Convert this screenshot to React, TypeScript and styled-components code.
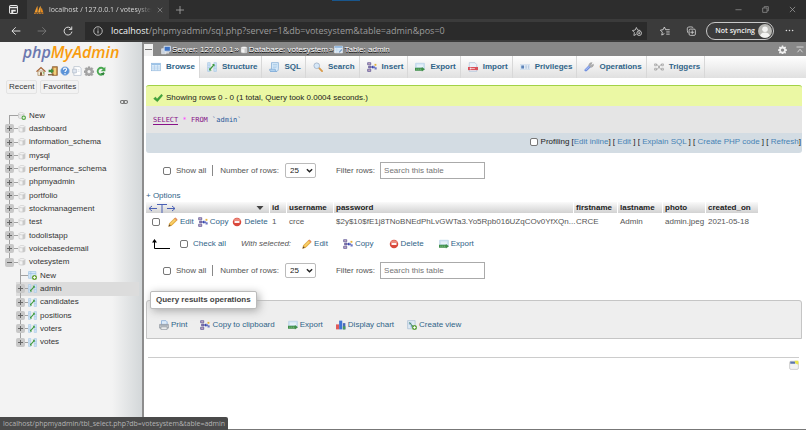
import React from "react";
import styled, { createGlobalStyle, css } from "styled-components";

const Global = createGlobalStyle`
  * { box-sizing: border-box; }
  html, body { margin: 0; padding: 0; }
  body { font-family: "Liberation Sans", Arial, sans-serif; font-size: 8px; line-height: 10px; color: #444; background: #fff; }
  button, input, select { font: inherit; color: inherit; margin: 0; }
  button { border: 0; padding: 0; background: none; cursor: pointer; }
  a { color: #2f6488; text-decoration: none; }
`;

/* ---------- icons ---------- */

const Svg = styled.svg<{ $s?: number }>`
  display: block;
  flex: none;
  width: ${(p) => p.$s ?? 10}px;
  height: ${(p) => p.$s ?? 10}px;
`;

type IconName =
  | "table" | "structure" | "sql" | "search" | "insert" | "export" | "import" | "privileges"
  | "operations" | "triggers" | "server" | "database" | "dbNew" | "tableNew" | "tableSmall" | "check"
  | "pencil" | "delete" | "print" | "chart" | "view" | "home" | "exit" | "help" | "doc" | "gear"
  | "reload" | "link" | "window" | "gearWhite" | "collapse" | "sort"
  | "back" | "forward" | "refresh" | "info" | "starAdd" | "favorites" | "collections" | "avatar"
  | "dots" | "minimize" | "restore" | "close" | "plus" | "tabActions" | "pma";

const gearPath =
  "M6.8 1h2.4l.4 2 1.4.6 1.8-1.1 1.6 1.7-1.1 1.7.6 1.4 2.1.5v2.4l-2.1.4-.6 1.4 1.1 1.8-1.6 1.6-1.8-1.1-1.4.6-.4 2.1H6.8l-.4-2.1-1.4-.6-1.8 1.1-1.6-1.6 1.1-1.8-.6-1.4L0 10.200V7.800l2.100-.5.6-1.400L1.600 4.200l1.600-1.700L5 3.600 6.400 3zM8 6a3 3 0 1 0 0 6 3 3 0 0 0 0-6z";

const art: Record<IconName, React.ReactNode> = {
  table: (
    <>
      <rect x="1" y="2" width="14" height="12" fill="#e3f0fb" stroke="#8db4da" />
      <rect x="1" y="2" width="14" height="3" fill="#9cc2e6" />
      <path d="M1 8h14M1 11h14M5.500 5v9M10.500 5v9" stroke="#a9c9e8" />
    </>
  ),
  structure: (
    <>
      <path d="M1 1h4v14H1zM11 1h4v14h-4z" fill="#cfe4f7" stroke="#a3c6e4" />
      <path d="M1 5h4M1 9h4M11 6h4M11 10h4" stroke="#a3c6e4" />
      <path d="M4.500 12L11 4.500" stroke="#3e9a3c" strokeWidth="2" />
      <path d="M3.500 9.500v4h4zM12 7V3H8z" fill="#3e9a3c" />
    </>
  ),
  sql: (
    <>
      <path d="M4 1h11v9.500c0 2-1 4.500-3 4.500H2c2 0 2-2 2-4z" fill="#d8ebfa" stroke="#6e9fd0" />
      <path d="M1 11.500h9c0 2 .5 3.500 2 3.500H3c-1.500 0-2-1.500-2-3.500z" fill="#b6d5f0" stroke="#6e9fd0" />
      <path d="M6 4h7M6 6.500h7M6 9h6" stroke="#9bc0e2" />
    </>
  ),
  search: (
    <>
      <path d="M9.500 9.500l5 5" stroke="#d99b4a" strokeWidth="3" strokeLinecap="round" />
      <circle cx="6" cy="6" r="4.500" fill="#d6e8f8" stroke="#a7b8cc" strokeWidth="1.500" />
    </>
  ),
  insert: (
    <>
      <path d="M1 1h5v3.500H1zM2.500 6.500h4v3h-4zM1 11.500h5V15H1z" fill="#8b80b8" stroke="#5b5290" />
      <path d="M2 2.800h3M2 13.200h3" stroke="#e7c0c0" strokeWidth="1.200" />
      <path d="M6.500 8L10 5v2h3v2h-3v2z" fill="#3b49b0" />
      <path d="M12 3h3v3h-3z" fill="#e4b23a" />
      <path d="M12 8.500h3.500v3.500H12z" fill="#6d76c2" />
    </>
  ),
  export: (
    <>
      <path d="M1 2h14v9H1z" fill="#cfe3f4" stroke="#b2cde4" />
      <path d="M3 5h10M3 7h10" stroke="#fff" />
      <path d="M0 9h11V8l5 3.500-5 3.500v-1H0z" fill="#3f8f4b" />
      <path d="M2 11.500h9" stroke="#a8dca5" strokeDasharray="2 1" />
    </>
  ),
  import: (
    <>
      <path d="M2 1h9l3 3v11H2z" fill="#eaf1f9" stroke="#a9bdd4" />
      <path d="M0 8h16v5H0z" fill="#d9505a" />
      <path d="M3 10.500h8M5 9L3 10.500 5 12" stroke="#fff" fill="none" />
    </>
  ),
  privileges: (
    <>
      <path d="M0 4h16v8H0z" fill="#e8f0f8" stroke="#c9d8e8" />
      <path d="M2 5.500h4.500v5H2z" fill="#5c83b8" />
      <path d="M8.500 6.500h2.500M8.500 9.500h2.500M12.500 6.500h2M12.500 9.500h2" stroke="#6c8db8" />
    </>
  ),
  operations: (
    <>
      <path d="M3 13L10 6" stroke="#6f8fe0" strokeWidth="4.500" strokeLinecap="round" />
      <path d="M3 12.500L9.500 6" stroke="#bccbf7" strokeWidth="1.500" strokeLinecap="round" />
      <path d="M8 5.500C7.500 3 10 .5 13 1.200L11 3.500l1.500 1.700 2.500-1.700c.7 3-2 5.500-4.500 4.700z" fill="#b4b4b4" stroke="#8c8c8c" strokeWidth=".8" />
    </>
  ),
  triggers: (
    <>
      <path d="M1 4h4l6 8h4M1 12h4l6-8h4" stroke="#a5a5a5" strokeWidth="1.500" fill="none" />
      <path d="M1 3h3v3H1zM12 3h3v3h-3zM12 10h3v3h-3zM1 10h3v3H1z" fill="#dcdcdc" stroke="#9d9d9d" />
    </>
  ),
  server: (
    <>
      <path d="M1 6h7v8H1z" fill="#c9d3df" stroke="#f0f4f8" />
      <path d="M5 2h10v8H5z" fill="#3d72c4" stroke="#dce6f2" strokeWidth="1.500" />
      <path d="M7 12.500h6" stroke="#e8e8e8" strokeWidth="2" />
    </>
  ),
  database: (
    <>
      <path d="M2 3.500v9C2 14.500 14 14.500 14 12.500v-9" fill="#f2f2f2" stroke="#b5b5b5" />
      <path d="M9 5.500v8.500c3 0 5-.5 5-1.500v-9z" fill="#c9c9c9" />
      <ellipse cx="8" cy="3.500" rx="6" ry="2.200" fill="#fafafa" stroke="#b5b5b5" />
    </>
  ),
  dbNew: (
    <>
      <path d="M1 3.500v8C1 13.500 12 13.500 12 11.500v-8" fill="#e8e8e8" stroke="#b5b5b5" />
      <ellipse cx="6.500" cy="3.500" rx="5.500" ry="2.200" fill="#fafafa" stroke="#b5b5b5" />
      <circle cx="11.500" cy="11.500" r="4.500" fill="#52a642" />
      <path d="M11.500 9v5M9 11.500h5" stroke="#fff" strokeWidth="1.600" />
    </>
  ),
  tableNew: (
    <>
      <path d="M1 1h13v12H1z" fill="#d5e8f8" stroke="#93bbdf" />
      <path d="M1 4.500h13M5 1v12" stroke="#93bbdf" />
      <circle cx="11.500" cy="11.500" r="4.500" fill="#6aa33a" />
      <path d="M11.500 9v5M9 11.500h5" stroke="#fff" strokeWidth="1.600" />
    </>
  ),
  tableSmall: (
    <>
      <path d="M1 2h14v12H1z" fill="#dcebf8" stroke="#f2f7fc" />
      <path d="M1 2h14v3H1z" fill="#8db4dc" />
      <path d="M5 5v9M1 9h14" stroke="#b4d0ea" />
      <path d="M9 13l5-5" stroke="#7a9cc2" strokeWidth="2" />
    </>
  ),
  check: (
    <path d="M1 9l3-2.500 2.500 3L13.500 2 15.500 4 7 14z" fill="#3fa53a" stroke="#2f8430" strokeWidth=".6" />
  ),
  pencil: (
    <>
      <path d="M1 15l1.500-5L11 1.500 14.500 5 6 13.500z" fill="#f3bf4b" stroke="#c98a26" strokeWidth=".8" />
      <path d="M10 2.500L12 .8 15.300 4l-1.800 2z" fill="#e28a62" />
      <path d="M1 15l1-3.500L4.500 14z" fill="#5a4632" />
      <path d="M4.500 11L11.500 4" stroke="#fde9a8" />
    </>
  ),
  delete: (
    <>
      <circle cx="8" cy="8" r="6.800" fill="#d9483b" />
      <path d="M2 6.500a6.200 6.200 0 0 1 12 0z" fill="#ec8a7d" />
      <path d="M4 6.500h8v3H4z" fill="#fff" />
    </>
  ),
  print: (
    <>
      <path d="M4 1h7l2 2v5H4z" fill="#dcebfa" stroke="#6d9ad2" />
      <path d="M1 7h14v6H1z" fill="#cfd3d9" stroke="#7d858f" />
      <path d="M3 11h10v4H3z" fill="#f2f2f2" stroke="#7d858f" />
      <path d="M2 9h12" stroke="#8e969f" />
    </>
  ),
  chart: (
    <>
      <path d="M0 7h5v8H0z" fill="#e05a5a" />
      <path d="M5 1h5v14H5z" fill="#3f74d4" />
      <path d="M11 5h4v10h-4z" fill="#4a69b8" />
      <path d="M11 10h4v5h-4z" fill="#4c9a5a" />
    </>
  ),
  view: (
    <>
      <path d="M1 1h12v13H1z" fill="#dfeaf4" stroke="#9fb8d0" />
      <path d="M3 4h4v3H3zM6 8h4v4H6z" fill="#7fa9c9" />
      <path d="M4 4l6 7" stroke="#4c8d54" strokeWidth="1.500" />
      <circle cx="12" cy="12" r="4" fill="#63a545" />
      <path d="M12 10v4M10 12h4" stroke="#fff" strokeWidth="1.500" />
    </>
  ),
  home: (
    <>
      <path d="M3 8h10v7H3z" fill="#f6eedd" stroke="#9c7a4c" />
      <path d="M0 8.500L8 1l8 7.500-1.500 1L8 4 1.500 9.500z" fill="#a8683a" />
      <path d="M6.500 10h3v5h-3z" fill="#7c5430" />
      <path d="M11 10h2v2h-2z" fill="#6fb052" />
    </>
  ),
  exit: (
    <>
      <path d="M7 1h8v14H7z" fill="#c58b48" stroke="#7d5223" />
      <path d="M9 3h4v11H9z" fill="#f0d17c" />
      <path d="M1 6h4V3.500L9.500 8 5 12.500V10H1z" fill="#3f8f3a" />
      <path d="M0 13h9v2H0z" fill="#7e5b36" />
    </>
  ),
  help: (
    <>
      <circle cx="8" cy="8" r="7" fill="#5b93d8" stroke="#a8c2e4" />
      <path d="M5.500 6c0-3.500 5-3.500 5-.5 0 2-2.500 2-2.500 4M8 11v2" stroke="#fff" strokeWidth="1.800" fill="none" />
    </>
  ),
  doc: (
    <>
      <path d="M3 1h9l2.500 3v11H3z" fill="#fff" stroke="#a8b4c4" />
      <path d="M1 5h6v6H1z" fill="#dfe6f0" stroke="#a8b4c4" />
      <path d="M9 6h3M9 8.500h3" stroke="#c4cedb" />
    </>
  ),
  gear: <path d={gearPath} fill="#a4a4a4" stroke="#8a8a8a" strokeWidth=".6" fillRule="evenodd" />,
  gearWhite: <path d={gearPath} fill="#f0f0f0" fillRule="evenodd" />,
  reload: (
    <>
      <path d="M12.500 5A5.500 5.500 0 1 0 13 11" stroke="#49a850" strokeWidth="3" fill="none" />
      <path d="M15 1v7.500H7.500z" fill="#49a850" />
      <path d="M7 12l6-2-1 5z" fill="#2f7f3b" />
    </>
  ),
  link: (
    <>
      <rect x="1" y="5" width="8" height="6" rx="3" fill="none" stroke="#777" strokeWidth="2.200" />
      <rect x="7" y="5" width="8" height="6" rx="3" fill="none" stroke="#777" strokeWidth="2.200" />
    </>
  ),
  window: (
    <>
      <rect x="1" y="2" width="14" height="13" rx="2" fill="#f2f2f2" stroke="#b9b9b9" />
      <path d="M2 2.500h8v3.500H2z" fill="#5a74ae" />
      <path d="M9 1h6v6c-3 0-6-2-6-6z" fill="#e9e54a" />
    </>
  ),
  collapse: <path d="M1 2h14M3 12.500l5-6 5 6" stroke="#dedede" strokeWidth="1.800" fill="none" />,
  sort: <path d="M1 4h14L8 12z" fill="#444" />,
  back: <path d="M15 8H1.500M7.500 2L1.500 8l6 6" stroke="#e4e4e4" strokeWidth="1.500" fill="none" />,
  forward: <path d="M1 8h13.500M8.500 2l6 6-6 6" stroke="#777" strokeWidth="1.500" fill="none" />,
  refresh: (
    <>
      <path d="M13.500 5A6.300 6.300 0 1 0 14.300 9" stroke="#e4e4e4" strokeWidth="1.500" fill="none" />
      <path d="M14 .8V5.500H9.300" stroke="#e4e4e4" strokeWidth="1.500" fill="none" />
    </>
  ),
  info: (
    <>
      <circle cx="8" cy="8" r="6.800" stroke="#d4d4d4" strokeWidth="1.300" fill="none" />
      <path d="M8 7v4.800M8 4v1.700" stroke="#d4d4d4" strokeWidth="1.500" />
    </>
  ),
  starAdd: (
    <>
      <path d="M7 13.200l-4 2 .8-4.700L.6 7.200l4.500-.7L7 2.400l2 4.100 4.200.6" stroke="#d0d0d0" strokeWidth="1.300" fill="none" />
      <circle cx="11.500" cy="11.500" r="3.700" fill="#2d2d2d" stroke="#d0d0d0" strokeWidth="1.400" />
      <path d="M11.500 9.800v3.400M9.800 11.500h3.400" stroke="#d0d0d0" strokeWidth="1.200" />
    </>
  ),
  favorites: (
    <path d="M7 12.200l-4.200 2.300.9-4.700L.6 6.600l4.400-.7L7 1.600l2 4.300h6.500M10 9.500h5.500M10 13h5.500" stroke="#d8d8d8" strokeWidth="1.400" fill="none" />
  ),
  collections: (
    <>
      <path d="M4 11.500C2 11 1.500 4 2.500 2.500 4 1 10 1 11.500 2.500" stroke="#d8d8d8" strokeWidth="1.300" fill="none" />
      <rect x="5" y="5" width="10" height="10" rx="2" stroke="#d8d8d8" strokeWidth="1.300" fill="none" />
      <path d="M10 7v6M7 10h6" stroke="#d8d8d8" strokeWidth="1.300" />
    </>
  ),
  avatar: (
    <>
      <circle cx="8" cy="8" r="8" fill="#b9b9b5" />
      <circle cx="8" cy="6" r="3.200" fill="#f4f4f2" />
      <path d="M2.500 13.500c1-5 10-5 11 0A8 8 0 0 1 2.500 13.500z" fill="#f4f4f2" />
    </>
  ),
  dots: (
    <g fill="#ddd">
      <circle cx="2.500" cy="8" r="1.400" />
      <circle cx="8" cy="8" r="1.400" />
      <circle cx="13.500" cy="8" r="1.400" />
    </g>
  ),
  minimize: <path d="M1 8.500h14" stroke="#999" strokeWidth="1.600" />,
  restore: (
    <path d="M1.500 4.500h10v10h-10zM5 4V1.500h9.500V11H12" stroke="#999" strokeWidth="1.600" fill="none" />
  ),
  close: <path d="M2 2l12 12M14 2L2 14" stroke="#a5a5a5" strokeWidth="1.600" />,
  plus: <path d="M8 0v16M0 8h16" stroke="#aaa" strokeWidth="1.600" />,
  tabActions: (
    <>
      <rect x="1" y="1" width="14" height="14" rx="2" fill="none" stroke="#e8e8e8" strokeWidth="1.800" />
      <path d="M1 4.500h14" stroke="#e8e8e8" strokeWidth="2.500" />
      <path d="M4 8.500h8v3H7.500V14H4z" fill="#e8e8e8" />
    </>
  ),
  pma: (
    <>
      <path d="M1 12C2 8 4 4 5.500 1 6 5 6 9 5.500 12z" fill="#f39a2b" />
      <path d="M6.500 12c.5-4 2-8 4-11 .8 4 0 8-.8 11z" fill="#f6a93b" />
      <path d="M10.500 12c0-3 .8-6 2-8 .8 3 1.800 6 2.500 8z" fill="#e98a1c" />
      <path d="M0 13.500h16" stroke="#b9772b" strokeWidth="2" strokeDasharray="3 1" />
    </>
  ),
};

const Icon = ({ name, size }: { name: IconName; size?: number }) => (
  <Svg $s={size} viewBox="0 0 16 16" aria-hidden="true">
    {art[name]}
  </Svg>
);

/* ---------- browser frame ---------- */

const Page = styled.div`
  position: relative;
  display: flex;
  flex-direction: column;
  min-height: 100vh;
  border-bottom: 1px solid #777;
`;

const TitleBar = styled.header`
  display: flex;
  align-items: stretch;
  height: 19px;
  background: linear-gradient(#19568c, #19568c) 332px 0 / 28px 1px no-repeat #2d2d2d;
  font-family: "Open Sans", "Noto Sans", sans-serif;
`;

const TabActions = styled.button`
  display: grid;
  place-items: center;
  width: 27px;
`;

const BrowserTab = styled.div`
  display: flex;
  align-items: center;
  gap: 5px;
  width: 142px;
  padding: 0 6px 0 7px;
  background: #3b3b3b;
  color: #d6d6d6;
`;

const TabTitle = styled.span`
  flex: 1;
  min-width: 0;
  overflow: hidden;
  white-space: nowrap;
  font-size: 7px;
  mask-image: linear-gradient(to right, #000 85%, transparent);
`;

const NewTab = styled(TabActions)`
  width: 22px;
`;

const WindowButtons = styled.div`
  display: flex;
  align-items: center;
  gap: 20px;
  margin-left: auto;
  padding-right: 10px;
`;

const Toolbar = styled.div`
  display: flex;
  align-items: center;
  height: 23px;
  padding: 0 12px 0 11px;
  background: #3b3b3b;
  font-family: "Open Sans", "Noto Sans", sans-serif;
`;

const NavButtons = styled.div`
  display: flex;
  gap: 16px;
  width: 74px;
`;

const Address = styled.div`
  flex: 1;
  display: flex;
  align-items: center;
  gap: 8px;
  height: 18px;
  padding: 0 5px 0 8px;
  background: #2b2b2b;
`;

const Url = styled.span`
  flex: 1;
  color: #9b9b9b;
  font-size: 9px;
  line-height: 14px;
  b { color: #f2f2f2; font-weight: 400; }
`;

const ToolButtons = styled.div`
  display: flex;
  align-items: center;
  gap: 16px;
  padding: 0 10px 0 13px;
`;

const Sync = styled.button`
  display: flex;
  align-items: center;
  gap: 3px;
  height: 18px;
  padding: 0 1px 0 8px;
  border: 1px solid #c9c9c9;
  border-radius: 9px;
  color: #f0f0f0;
  font-weight: 600;
  font-size: 7px;
  margin-right: 11px;
`;

/* ---------- sidebar ---------- */

const Body = styled.div`
  flex: 1;
  display: flex;
`;

const Sidebar = styled.aside`
  flex: none;
  width: 144px;
  border-right: 2px solid #8d8d8d;
  background: linear-gradient(to right, #f3f3f3 0, #f3f3f3 112px, #d3d7d9 142px);
`;

const Logo = styled.a`
  display: block;
  color: #6c78af;
  font: italic 600 16px/20px "Open Sans", sans-serif;
  text-align: center;
  b { color: #f89c0e; font-weight: 600; }
`;

const QuickLinks = styled.nav`
  display: flex;
  justify-content: center;
  gap: 2px;
  padding: 4px 0;
`;

const PillRow = styled.div`
  display: flex;
  gap: 3px;
  padding: 0 6px;
`;

const Pill = styled.button`
  height: 14px;
  padding: 0 2px;
  border: 1px solid #e3e3e3;
  border-radius: 2px;
  background: #f2f2f2;
  color: #333;
`;

const LinkRow = styled.div`
  display: flex;
  justify-content: flex-end;
  padding: 4px 14px 3px 0;
`;

const Tree = styled.ul`
  display: grid;
  grid-auto-rows: 1fr;
  height: 240px;
  margin: 0;
  padding: 0;
  list-style: none;
`;

const line = "linear-gradient(#a2a2a2, #a2a2a2)";

const TreeRow = styled.li<{ $child?: boolean; $active?: boolean; $first?: boolean; $last?: boolean }>`
  display: flex;
  align-items: center;
  margin-left: ${(p) => (p.$child ? 16 : 5)}px;
  margin-right: 3px;
  background-color: ${(p) => (p.$active ? "#dcdcdc" : "transparent")};
  background-image: ${line};
  background-repeat: no-repeat;
  background-position: 4px ${(p) => (p.$first ? "100%" : "0")};
  background-size: 1px ${(p) => (p.$first || p.$last ? "50%" : "100%")};
  a { color: #333; margin-left: 3px; }
`;

const Expander = styled.button`
  width: 9px;
  height: 9px;
  border-radius: 2px;
  background: linear-gradient(#666, #666) center / 5px 1px no-repeat,
    linear-gradient(#666, #666) center / 1px 5px no-repeat, #c8c8c8;
  &[aria-expanded="true"] {
    background: linear-gradient(#666, #666) center / 5px 1px no-repeat, #c8c8c8;
  }
`;

const Stem = styled.span<{ $wide?: boolean; $short?: boolean }>`
  height: 1px;
  background: #a2a2a2;
  width: ${(p) => (p.$wide ? (p.$short ? 8 : 9) : p.$short ? 3 : 4)}px;
  margin-left: ${(p) => (p.$wide ? 4 : 0)}px;
`;

/* ---------- main panel ---------- */

const Main = styled.main`
  flex: 1;
  min-width: 0;
  display: flex;
  flex-direction: column;
`;

const Breadcrumb = styled.nav`
  display: flex;
  align-items: center;
  gap: 1px;
  height: 14px;
  padding: 1px 2px 0 0;
  background: #888;
  color: #fff;
  text-shadow: 0 1px 0 #000;
  a { color: #fff; }
`;

const HideNav = styled.button`
  width: 9px;
  height: 12px;
  margin-right: 7px;
  background: linear-gradient(#777, #777) center / 7px 1px no-repeat, #f2f2f2;
`;

const CrumbTools = styled.span`
  display: flex;
  gap: 9px;
  margin-left: auto;
`;

const Tabs = styled.nav`
  display: flex;
  height: 22px;
  background: linear-gradient(#fff, #e0e0e0);
`;

const Tab = styled.a<{ $active?: boolean }>`
  display: flex;
  align-items: center;
  gap: 5px;
  padding: 0 4px 0 7px;
  border-right: 1px solid #d8d8d8;
  font-weight: 700;
  ${(p) => p.$active && css`background: #fff;`}
`;

const Content = styled.div`
  padding: 7px 4px 0 2px;
`;

const Success = styled.div`
  display: flex;
  align-items: center;
  gap: 3px;
  height: 21px;
  padding: 4px 7px 0;
  border-top: 1px solid #a2d246;
  border-radius: 3px 3px 0 0;
  background: #ebf8a4;
  color: #222;
`;

const Sql = styled.pre`
  margin: 0;
  height: 27px;
  padding: 9px 7px;
  background: #e5e5e5;
  color: #2a5a9a;
  font: 7px/10px "DejaVu Sans Mono", "Liberation Mono", monospace;
  a, span { color: #818; }
  a { border-bottom: 1px solid #818; }
  i { color: #f4f; font-style: normal; }
`;

const SqlTools = styled.div`
  display: flex;
  align-items: center;
  justify-content: flex-end;
  gap: 2px;
  height: 20px;
  padding: 0 1px 3px 0;
  border-radius: 0 0 3px 3px;
  background: #d3dce3;
  color: #222;
  a { color: #4783b5; }
`;

const Check = styled.input.attrs({ type: "checkbox" })`
  appearance: none;
  display: block;
  flex: none;
  width: 8px;
  height: 8px;
  border: 1px solid #777;
  border-radius: 2px;
  background: #fff;
`;

const CheckLabel = styled.label<{ $tight?: boolean }>`
  display: flex;
  align-items: center;
  gap: ${(p) => (p.$tight ? 3 : 5)}px;
`;

const Filters = styled.form`
  display: flex;
  align-items: center;
  height: 17px;
  padding-left: 17px;
  color: #555;
`;

const Divider = styled.span`
  width: 1px;
  height: 11px;
  margin: 0 7px 0 6px;
  background: #888;
`;

const Field = styled.label<{ $gap: number }>`
  display: flex;
  align-items: center;
  gap: ${(p) => p.$gap}px;
  margin-right: 20px;
`;

const Select = styled.select`
  appearance: none;
  width: 31px;
  height: 15px;
  padding: 0 4px;
  border: 1px solid #bbb;
  border-radius: 2px;
  color: #222;
  background: url("data:image/svg+xml,%3Csvg xmlns='http://www.w3.org/2000/svg' viewBox='0 0 8 8'%3E%3Cpath d='M1 2.500l3 3 3-3' fill='none' stroke='%23222' stroke-width='1.600'/%3E%3C/svg%3E")
    right 2px center / 7px 7px no-repeat #fff;
`;

const SearchBox = styled.input`
  width: 105px;
  height: 17px;
  padding: 0 3px;
  border: 1px solid #aaa;
  background: #fff;
  &::placeholder { color: #757575; }
`;

const Options = styled.a`
  display: block;
  width: max-content;
`;

const Table = styled.table`
  table-layout: fixed;
  width: 614px;
  margin: 1px 0 0 -1px;
  border-spacing: 1px 0;
  th, td { padding: 0 2px; text-align: left; white-space: nowrap; }
  th { height: 11px; background: linear-gradient(#fafafa, #d2d2d2); color: #222; }
  td { height: 17px; color: #555; }
  td:first-child { padding: 0 6px; }
`;

const Col = styled.col<{ $w: number }>`
  width: ${(p) => p.$w}px;
`;

const HeadTools = styled.span`
  display: flex;
  align-items: center;
  justify-content: space-between;
  padding-right: 3px;
`;

const WideSvg = styled.svg<{ $w: number }>`
  display: block;
  flex: none;
  width: ${(p) => p.$w}px;
  height: 10px;
`;

const RowActions = styled.span`
  display: flex;
  align-items: center;
  gap: 4px;
`;

const IconLink = styled.a`
  display: flex;
  align-items: center;
  gap: 2px;
  white-space: nowrap;
`;

const BulkRow = styled.div`
  display: flex;
  align-items: center;
  gap: 15px;
  height: 16px;
  margin: 6px 0 10px;
  padding-left: 6px;
  em { color: #555; margin-right: -4px; }
`;

const BulkStart = styled.span`
  display: flex;
  align-items: center;
  gap: 10px;
`;

const Fieldset = styled.fieldset`
  margin: 12px 0 0;
  padding: 11px 12px 8px;
  border: 1px solid #c5c5c5;
  border-radius: 3px 3px 0 0;
  background: #eee;
  min-width: 0;
`;

const Legend = styled.legend`
  margin-left: -9px;
  padding: 3px 5px;
  border: 1px solid #bbb;
  border-radius: 2px;
  background: #fff;
  box-shadow: 2px 2px 8px #aaa;
  color: #444;
  font-weight: 700;
`;

const OperationLinks = styled.div`
  display: flex;
  gap: 13px;
`;

const Footer = styled.footer`
  display: flex;
  justify-content: flex-end;
  margin: 18px 3px 0 2px;
  padding-top: 2px;
  border-top: 1px solid #ccc;
`;

const Status = styled.div`
  position: absolute;
  left: 0;
  bottom: -1px;
  height: 13px;
  padding: 0 3px;
  background: #4a4a4a;
  border-radius: 0 2px 0 0;
  color: #b4b4b4;
  font: 7px/13px "Open Sans", "Noto Sans", sans-serif;
`;

/* ---------- data ---------- */

const databases = [
  "dashboard", "information_schema", "mysql", "performance_schema", "phpmyadmin", "portfolio",
  "stockmanagement", "test", "todolistapp", "voicebasedemail", "votesystem",
];
const tables = ["admin", "candidates", "positions", "voters", "votes"];

const tabs: [string, IconName][] = [
  ["Browse", "table"], ["Structure", "structure"], ["SQL", "sql"], ["Search", "search"],
  ["Insert", "insert"], ["Export", "export"], ["Import", "import"], ["Privileges", "privileges"],
  ["Operations", "operations"], ["Triggers", "triggers"],
];

const columns: [string, number, string][] = [
  ["id", 16, "1"],
  ["username", 46, "crce"],
  ["password", 239, "$2y$10$fE1j8TNoBNEdPhLvGWTa3.Yo5Rpb016UZqCOv0YfXQn..."],
  ["firstname", 43, "CRCE"],
  ["lastname", 44, "Admin"],
  ["photo", 42, "admin.jpeg"],
  ["created_on", 52, "2021-05-18"],
];

const bulk: [string, IconName][] = [["Edit", "pencil"], ["Copy", "insert"], ["Delete", "delete"], ["Export", "export"]];

const operations: [string, IconName][] = [
  ["Print", "print"], ["Copy to clipboard", "insert"], ["Export", "export"],
  ["Display chart", "chart"], ["Create view", "view"],
];

const FilterRow = () => (
  <Filters>
    <CheckLabel><Check /> Show all</CheckLabel>
    <Divider />
    <Field $gap={6}>
      Number of rows:
      <Select defaultValue="25"><option>25</option><option>50</option><option>100</option></Select>
    </Field>
    <Field $gap={5}>
      Filter rows:
      <SearchBox type="text" placeholder="Search this table" />
    </Field>
  </Filters>
);

const Gap = styled.div<{ $h: number }>`
  height: ${(p) => p.$h}px;
`;

export default function App() {
  return (
    <Page>
      <Global />
      <TitleBar>
        <TabActions aria-label="Tab actions"><Icon name="tabActions" size={9} /></TabActions>
        <BrowserTab>
          <Icon name="pma" size={10} />
          <TabTitle>localhost / 127.0.0.1 / votesystem</TabTitle>
          <button aria-label="Close tab"><Icon name="close" size={6} /></button>
        </BrowserTab>
        <NewTab aria-label="New tab"><Icon name="plus" size={8} /></NewTab>
        <WindowButtons>
          <button aria-label="Minimize"><Icon name="minimize" size={7} /></button>
          <button aria-label="Restore"><Icon name="restore" size={7} /></button>
          <button aria-label="Close"><Icon name="close" size={7} /></button>
        </WindowButtons>
      </TitleBar>
      <Toolbar>
        <NavButtons>
          <button aria-label="Back"><Icon name="back" /></button>
          <button aria-label="Forward"><Icon name="forward" /></button>
          <button aria-label="Refresh"><Icon name="refresh" /></button>
        </NavButtons>
        <Address>
          <Icon name="info" />
          <Url><b>localhost</b>/phpmyadmin/sql.php?server=1&amp;db=votesystem&amp;table=admin&amp;pos=0</Url>
          <button aria-label="Add to favorites"><Icon name="starAdd" /></button>
        </Address>
        <ToolButtons>
          <button aria-label="Favorites"><Icon name="favorites" /></button>
          <button aria-label="Collections"><Icon name="collections" /></button>
        </ToolButtons>
        <Sync>Not syncing <Icon name="avatar" size={14} /></Sync>
        <button aria-label="More"><Icon name="dots" size={9} /></button>
      </Toolbar>

      <Body>
        <Sidebar>
          <Logo href="#">php<b>MyAdmin</b></Logo>
          <QuickLinks>
            {(["home", "exit", "help", "doc", "gear", "reload"] as IconName[]).map((n) => (
              <a href="#" key={n} aria-label={n}><Icon name={n} /></a>
            ))}
          </QuickLinks>
          <PillRow>
            <Pill>Recent</Pill>
            <Pill>Favorites</Pill>
          </PillRow>
          <LinkRow><button aria-label="Unlink panel"><Icon name="link" size={8} /></button></LinkRow>
          <Tree>
            <TreeRow $first>
              <Stem $wide />
              <Icon name="dbNew" size={8} />
              <a href="#">New</a>
            </TreeRow>
            {databases.map((d) => (
              <TreeRow key={d} $last={d === "votesystem"}>
                <Expander aria-label={`Toggle ${d}`} aria-expanded={d === "votesystem"} />
                <Stem />
                <Icon name="database" size={8} />
                <a href="#">{d}</a>
              </TreeRow>
            ))}
            <TreeRow $child>
              <Stem $wide $short />
              <Icon name="tableNew" size={9} />
              <a href="#">New</a>
            </TreeRow>
            {tables.map((t) => (
              <TreeRow key={t} $child $active={t === "admin"} $last={t === "votes"}>
                <Expander aria-label={`Toggle ${t}`} aria-expanded={false} />
                <Stem $short />
                <Icon name="structure" size={9} />
                <a href="#">{t}</a>
              </TreeRow>
            ))}
          </Tree>
        </Sidebar>

        <Main>
          <Breadcrumb>
            <HideNav aria-label="Hide panel" />
            <Icon name="server" />
            <a href="#">Server: 127.0.0.1</a> »
            <Icon name="database" size={8} />
            <a href="#">Database: votesystem</a> »
            <Icon name="tableSmall" size={9} />
            <a href="#">Table: admin</a>
            <CrumbTools>
              <button aria-label="Page settings"><Icon name="gearWhite" size={9} /></button>
              <button aria-label="Scroll to top"><Icon name="collapse" size={8} /></button>
            </CrumbTools>
          </Breadcrumb>
          <Tabs>
            {tabs.map(([label, icon], i) => (
              <Tab href="#" key={label} $active={i === 0}><Icon name={icon} />{label}</Tab>
            ))}
          </Tabs>

          <Content>
            <Success><Icon name="check" />Showing rows 0 - 0 (1 total, Query took 0.0004 seconds.)</Success>
            <Sql><a href="#">SELECT</a> <i>*</i> <span>FROM</span> `admin`</Sql>
            <SqlTools>
              <CheckLabel $tight><Check /> Profiling</CheckLabel>
              <span>[<a href="#">Edit inline</a>] [ <a href="#">Edit</a> ] [ <a href="#">Explain SQL</a> ] [ <a href="#">Create PHP code</a> ] [ <a href="#">Refresh</a>]</span>
            </SqlTools>
            <Gap $h={9} />
            <FilterRow />
            <Gap $h={12} />
            <Options href="#">+ Options</Options>
            <Table>
              <colgroup>
                <Col $w={123} />
                {columns.map(([n, w]) => <Col key={n} $w={w} />)}
              </colgroup>
              <thead>
                <tr>
                  <th>
                    <HeadTools>
                      <WideSvg $w={28} viewBox="0 0 28 10" aria-label="Full texts">
                        <path d="M9 5.500H1M4 3L1 5.500 4 8M19 5.500h8M24 3l3 2.500L24 8M9 1.500h10M14 1.500V10" stroke="#4a60b4" fill="none" />
                      </WideSvg>
                      <Icon name="sort" size={8} />
                    </HeadTools>
                  </th>
                  {columns.map(([n]) => <th key={n}>{n}</th>)}
                </tr>
              </thead>
              <tbody>
                <tr>
                  <td>
                    <RowActions>
                      <Check aria-label="Select row" />
                      <Gap $h={1} />
                      <IconLink href="#"><Icon name="pencil" />Edit</IconLink>
                      <IconLink href="#"><Icon name="insert" />Copy</IconLink>
                      <IconLink href="#"><Icon name="delete" />Delete</IconLink>
                    </RowActions>
                  </td>
                  {columns.map(([n, , v]) => <td key={n}>{v}</td>)}
                </tr>
              </tbody>
            </Table>
            <BulkRow>
              <BulkStart>
                <WideSvg $w={18} viewBox="0 0 18 10" aria-hidden="true">
                  <path d="M2.500 2v7.500H18" stroke="#000" fill="none" />
                  <path d="M0 3.500L2.500 0 5 3.500z" />
                </WideSvg>
                <CheckLabel><Check /> <a href="#">Check all</a></CheckLabel>
              </BulkStart>
              <em>With selected:</em>
              {bulk.map(([label, icon]) => (
                <IconLink href="#" key={label}><Icon name={icon} />{label}</IconLink>
              ))}
            </BulkRow>
            <FilterRow />
            <Fieldset>
              <Legend>Query results operations</Legend>
              <OperationLinks>
                {operations.map(([label, icon]) => (
                  <IconLink href="#" key={label}><Icon name={icon} />{label}</IconLink>
                ))}
              </OperationLinks>
            </Fieldset>
            <Footer><button aria-label="Open new window"><Icon name="window" /></button></Footer>
          </Content>
        </Main>
      </Body>
      <Status>localhost/phpmyadmin/tbl_select.php?db=votesystem&amp;table=admin</Status>
    </Page>
  );
}
